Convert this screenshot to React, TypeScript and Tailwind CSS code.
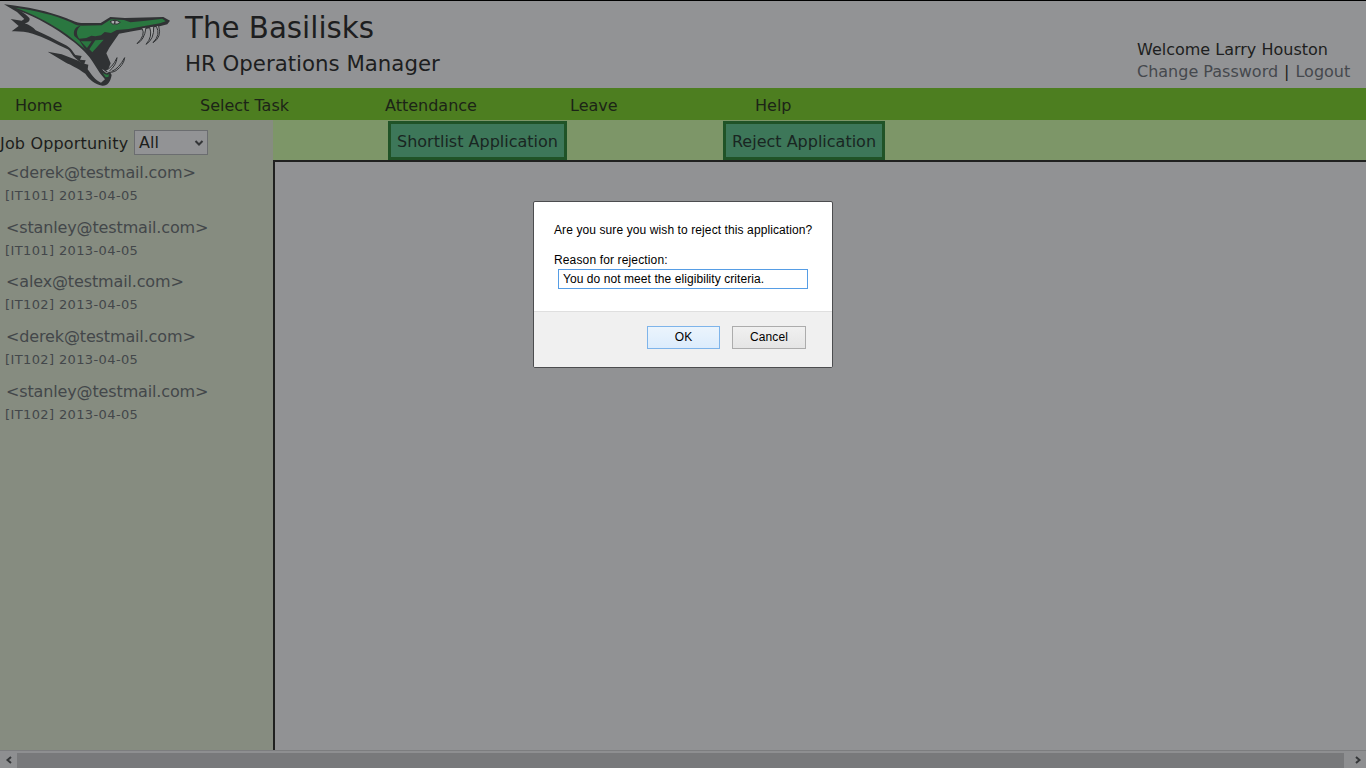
import React from "react";

const navItems = ["Home", "Select Task", "Attendance", "Leave", "Help"];

const applications = [
  { email: "derek@testmail.com", job: "IT101", date: "2013-04-05" },
  { email: "stanley@testmail.com", job: "IT101", date: "2013-04-05" },
  { email: "alex@testmail.com", job: "IT102", date: "2013-04-05" },
  { email: "derek@testmail.com", job: "IT102", date: "2013-04-05" },
  { email: "stanley@testmail.com", job: "IT102", date: "2013-04-05" },
];

function Logo() {
  return (
    <svg viewBox="0 0 540 264" className="h-[88px] w-[180px] shrink-0" aria-label="Basilisks logo">
      <path
        d="M12 13 C80 20 145 34 200 55 C220 63 232 70 246 69 L302 69 L331 51 L375 54 L490 51 L510 62 L502 73 L482 78 L440 86 L397 94 L357 101 L328 143 L319 160 L332 190 L325 207 L335 225 C331 247 322 258 307 257 C283 253 267 237 256 221 C231 203 213 195 198 188 L143 155 L185 163 L235 182 L247 191 L229 177 C215 166 213 154 203 148 C170 132 130 111 98 101 C76 95 55 93 35 94 L56 78 L32 57 L65 62 L73 57 L51 36 Z"
        fill="#303234"
      />
      <path
        d="M58 33 C110 52 168 85 212 119 C238 138 258 156 276 182 L300 220 L315 238 L303 248 C285 240 275 225 263 208 L265 194 L253 191 L257 181 L240 179 L245 168 L226 165 C216 152 212 142 195 134 C165 120 135 102 107 91 C99 81 88 75 74 70 C86 68 91 60 88 54 C79 44 70 38 58 33 Z"
        fill="#929395"
      />
      <path
        d="M46 23 C112 33 160 44 209 65 C222 72 232 77 246 77 C224 77 219 94 223 108 L239 122 L252 143 L262 152 C235 133 211 109 181 90 C138 62 96 41 46 23 Z"
        fill="#2a7740"
      />
      <path
        d="M242 77 L305 76 L333 58 L372 60 L391 67 L438 62 L487 56 L497 64 L480 70 L433 78 L386 87 L350 90 L333 99 L314 96 L303 106 L286 109 L274 107 L259 114 L238 116 C228 104 228 88 242 77 Z"
        fill="#2a7740"
      />
      <path d="M242 124 L275 124 L261 144 Z M286 121 L311 119 L277 157 L268 148 Z" fill="#2a7740" />
      <path d="M330 65 Q345 56 361 67 Q354 75 338 72 Z" fill="#aaacae" stroke="#303234" strokeWidth="3" />
      <path d="M345 61 L344 72" stroke="#303234" strokeWidth="4" />
      <path
        d="M426 85 Q438 105 411 131 Q433 121 438 83 M449 82 Q459 110 438 133 Q463 118 461 80 M469 79 Q483 104 459 128 Q486 112 476 78 M317 210 Q336 206 351 173 Q350 195 325 216 M335 214 Q356 207 374 173 Q372 194 348 212 Q339 217 330 217"
        fill="#a0a2a3"
        stroke="#303234"
        strokeWidth="3"
        strokeLinejoin="round"
      />
      <path d="M308 219 Q321 227 327 222 L325 231 L317 232 Z" fill="#2a7740" />
      <path d="M308 209 L319 218 L330 213" fill="none" stroke="#a0a2a3" strokeWidth="3" />
    </svg>
  );
}

function Chevron({ d, className }: { d: string; className: string }) {
  return (
    <svg viewBox="0 0 10 10" className={className} fill="none" stroke="#343638" strokeWidth="2">
      <path d={d} />
    </svg>
  );
}

function Header() {
  return (
    <header className="flex h-[88px] shrink-0 border-t border-black bg-[#929395]">
      <div className="-mt-px flex">
        <Logo />
      </div>
      <div className="flex flex-col pl-[5px] pt-[9px] text-[#1d1e20]">
        <h1 className="h-[37px] whitespace-nowrap text-[29.3px] leading-[37px]">The Basilisks</h1>
        <h2 className="h-[34px] whitespace-nowrap text-[21.3px] leading-[34px]">HR Operations Manager</h2>
      </div>
      <div className="ml-auto w-[230px] whitespace-nowrap pl-px pt-[38px] text-[16px] leading-[22px] text-[#1d1e20]">
        <p>Welcome Larry Houston</p>
        <p>
          <a className="text-[#45484d]">Change Password</a>
          <span className="mx-[6px]">|</span>
          <a className="text-[#45484d]">Logout</a>
        </p>
      </div>
    </header>
  );
}

function Sidebar() {
  return (
    <aside className="w-[273px] shrink-0 bg-[#868c80]">
      <div className="flex h-[40px] items-center pt-[5px] text-[#1d1e1c]">
        <span className="w-[134px] whitespace-nowrap pt-[2px] text-[16px] tracking-[0.17px]">Job Opportunity</span>
        <button className="flex h-[25px] w-[74px] items-center justify-between border border-[#6b6d70] bg-[#929395] pl-[4px] pr-[3px] text-[16px]">
          <span className="pt-px">All</span>
          <Chevron d="M1.5 3 L5 6.5 L8.5 3" className="size-[10px]" />
        </button>
      </div>
      <ul className="pt-px text-[#43474a]">
        {applications.map((a, i) => (
          <li key={i} className="h-[54.7px] whitespace-nowrap pl-[5px]">
            <div className="h-[23px] pl-px text-[16px] leading-[23px] tracking-[-0.14px]">&lt;{a.email}&gt;</div>
            <div className="h-[24px] text-[13px] leading-[24px] tracking-[0.38px]">
              [{a.job}] {a.date}
            </div>
          </li>
        ))}
      </ul>
    </aside>
  );
}

function RejectDialog() {
  return (
    <div
      role="dialog"
      className="absolute left-[533px] top-[201px] flex h-[167px] w-[300px] flex-col overflow-hidden rounded-[2px] border border-[#4c4d4f] bg-white font-['Liberation_Sans',Arial,sans-serif] text-[12px] text-black"
    >
      <div className="flex flex-1 flex-col pl-[20px] pt-[20px]">
        <p className="h-[30px] whitespace-nowrap leading-[16px] tracking-[0.1px]">
          Are you sure you wish to reject this application?
        </p>
        <label className="h-[17px] whitespace-nowrap leading-[16px] tracking-[0.14px]">Reason for rejection:</label>
        <div className="ml-[4px] h-[20px] w-[250px] whitespace-nowrap border border-[#569de5] pl-[4px] leading-[18px] tracking-[0.07px]">
          You do not meet the eligibility criteria.
        </div>
      </div>
      <div className="flex h-[56px] shrink-0 justify-end gap-[12px] border-t border-[#dfdfdf] bg-[#f0f0f0] pr-[26px] pt-[14px]">
        <button className="h-[23px] w-[73px] border border-[#7eb4ea] bg-linear-to-b from-[#ebf4fc] to-[#dcecfc] pb-[2px]">
          OK
        </button>
        <button className="h-[23px] w-[74px] border border-[#acacac] bg-linear-to-b from-[#f0f0f0] to-[#e5e5e5] pb-[2px] tracking-[0.14px]">
          Cancel
        </button>
      </div>
    </div>
  );
}

export default function App() {
  return (
    <div className="relative flex h-[768px] w-[1366px] flex-col overflow-hidden bg-[#919294] font-['DejaVu_Sans',Verdana,sans-serif]">
      <Header />
      <nav className="flex h-[32px] shrink-0 items-center bg-[#4d7e20] pl-[15px] pt-[3px] text-[16px] text-[#1c2417]">
        {navItems.map((item) => (
          <a key={item} className="w-[185px] whitespace-nowrap">
            {item}
          </a>
        ))}
      </nav>
      <div className="flex min-h-0 flex-1">
        <Sidebar />
        <main className="flex flex-1 flex-col">
          <div className="flex h-[40px] shrink-0 bg-[#7d9668] pl-[115px] pt-px text-[16px] text-[#192622]">
            <button className="mr-[156px] h-[39px] w-[179px] whitespace-nowrap border-[3px] border-[#205327] bg-[#3d7759] pt-[2px]">
              Shortlist Application
            </button>
            <button className="h-[39px] w-[162px] whitespace-nowrap border-[3px] border-[#205327] bg-[#3d7759] pt-[2px]">
              Reject Application
            </button>
          </div>
          <div className="flex-1 border-l-2 border-t-2 border-[#202120] bg-[#919294]" />
        </main>
      </div>
      <div className="flex h-[18px] shrink-0 items-center border-t border-[#7c7d7f] bg-[#8e8f91] pt-px">
        <div className="flex w-[17px] justify-center">
          <Chevron d="M7 2 L3.5 5 L7 8" className="size-[10px]" />
        </div>
        <div className="h-[15px] w-[1327px] bg-[#78797b]" />
        <div className="flex flex-1 justify-center pl-[5px]">
          <Chevron d="M3 2 L6.5 5 L3 8" className="size-[10px]" />
        </div>
      </div>
      <RejectDialog />
    </div>
  );
}
